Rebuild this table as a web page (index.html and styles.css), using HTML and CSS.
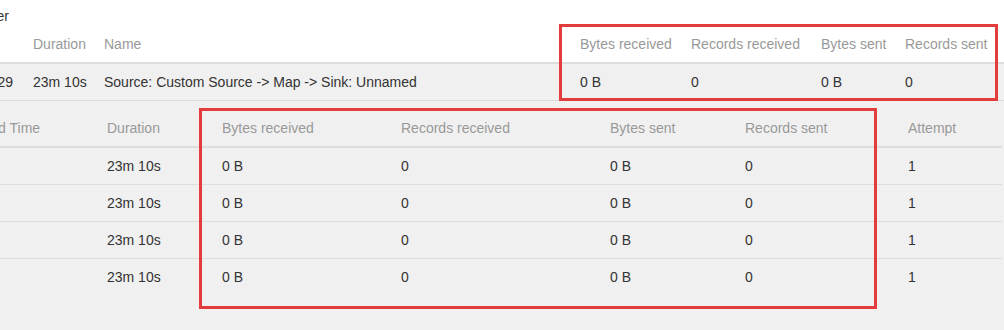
FILE: index.html
```html
<!DOCTYPE html>
<html lang="en">
<head>
  <meta charset="UTF-8">
  <meta name="viewport" content="width=device-width, initial-scale=1.0">
  <title>Job Vertex - Subtasks</title>
  <link rel="stylesheet" href="styles.css">
</head>
<body>
  <div class="tab-title"><span>TaskManager</span></div>

  <table class="table vertices">
    <colgroup>
      <col style="width: 125px">
      <col style="width: 71px">
      <col style="width: 476px">
      <col style="width: 111px">
      <col style="width: 130px">
      <col style="width: 84px">
      <col style="width: 113px">
    </colgroup>
    <thead>
      <tr>
        <th>End Time</th>
        <th>Duration</th>
        <th>Name</th>
        <th>Bytes received</th>
        <th>Records received</th>
        <th>Bytes sent</th>
        <th>Records sent</th>
      </tr>
    </thead>
    <tbody>
      <tr class="active">
        <td class="time">10:49:29</td>
        <td>23m 10s</td>
        <td>Source: Custom Source -&gt; Map -&gt; Sink: Unnamed</td>
        <td>0 B</td>
        <td>0</td>
        <td>0 B</td>
        <td>0</td>
      </tr>
      <tr class="detail">
        <td colspan="7">
          <table class="table subtasks">
            <colgroup>
              <col style="width: 65px">
              <col style="width: 126px">
              <col style="width: 115px">
              <col style="width: 179px">
              <col style="width: 209px">
              <col style="width: 135px">
              <col style="width: 163px">
              <col style="width: 102px">
            </colgroup>
            <thead>
              <tr>
                <th>Start Time</th>
                <th>End Time</th>
                <th>Duration</th>
                <th>Bytes received</th>
                <th>Records received</th>
                <th>Bytes sent</th>
                <th>Records sent</th>
                <th>Attempt</th>
              </tr>
            </thead>
            <tbody>
              <tr><td></td><td></td><td>23m 10s</td><td>0 B</td><td>0</td><td>0 B</td><td>0</td><td>1</td></tr>
              <tr><td></td><td></td><td>23m 10s</td><td>0 B</td><td>0</td><td>0 B</td><td>0</td><td>1</td></tr>
              <tr><td></td><td></td><td>23m 10s</td><td>0 B</td><td>0</td><td>0 B</td><td>0</td><td>1</td></tr>
              <tr><td></td><td></td><td>23m 10s</td><td>0 B</td><td>0</td><td>0 B</td><td>0</td><td>1</td></tr>
            </tbody>
          </table>
        </td>
      </tr>
    </tbody>
  </table>

  <div class="highlight highlight-top"></div>
  <div class="highlight highlight-sub"></div>
</body>
</html>
```

FILE: styles.css
```css
* {
  margin: 0;
  padding: 0;
  box-sizing: border-box;
}

html, body {
  height: 100%;
}

body {
  font-family: 'Liberation Sans', Arial, sans-serif;
  font-size: 14px;
  line-height: 20px;
  color: #333;
  background-color: #f0f0f0;
  overflow: hidden;
  position: relative;
}

.tab-title {
  background-color: #fff;
  height: 26px;
  padding-top: 6px;
}

.tab-title span {
  display: block;
  width: 100px;
  margin-left: -91px;
  text-align: right;
  white-space: nowrap;
}

.table {
  border-collapse: collapse;
  table-layout: fixed;
}

.table th,
.table td {
  padding: 8px;
  text-align: left;
  vertical-align: top;
  white-space: nowrap;
  overflow: hidden;
}

.table th {
  font-weight: normal;
  color: #999;
  border-bottom: 2px solid #ddd;
}

.table tbody td {
  border-top: 1px solid #ddd;
}

.table tbody tr:first-child td {
  border-top: 0;
}

.vertices {
  width: 1110px;
  margin-left: -100px;
}

.vertices > thead > tr {
  background-color: #fff;
}

.vertices td.time {
  text-align: right;
  padding-right: 12px;
}

.vertices > tbody > tr.active {
  background-color: #f0f0f0;
}

.vertices > tbody > tr.detail > td {
  border-top: 1px solid #ddd;
  padding-top: 9px;
  background-color: #f0f0f0;
}

.subtasks {
  width: 1094px;
}

.highlight {
  position: absolute;
  border: 3px solid #e23c3c;
  pointer-events: none;
}

.highlight-top {
  left: 559px;
  top: 24px;
  width: 439px;
  height: 77px;
}

.highlight-sub {
  left: 199px;
  top: 108px;
  width: 678px;
  height: 201px;
}
```
